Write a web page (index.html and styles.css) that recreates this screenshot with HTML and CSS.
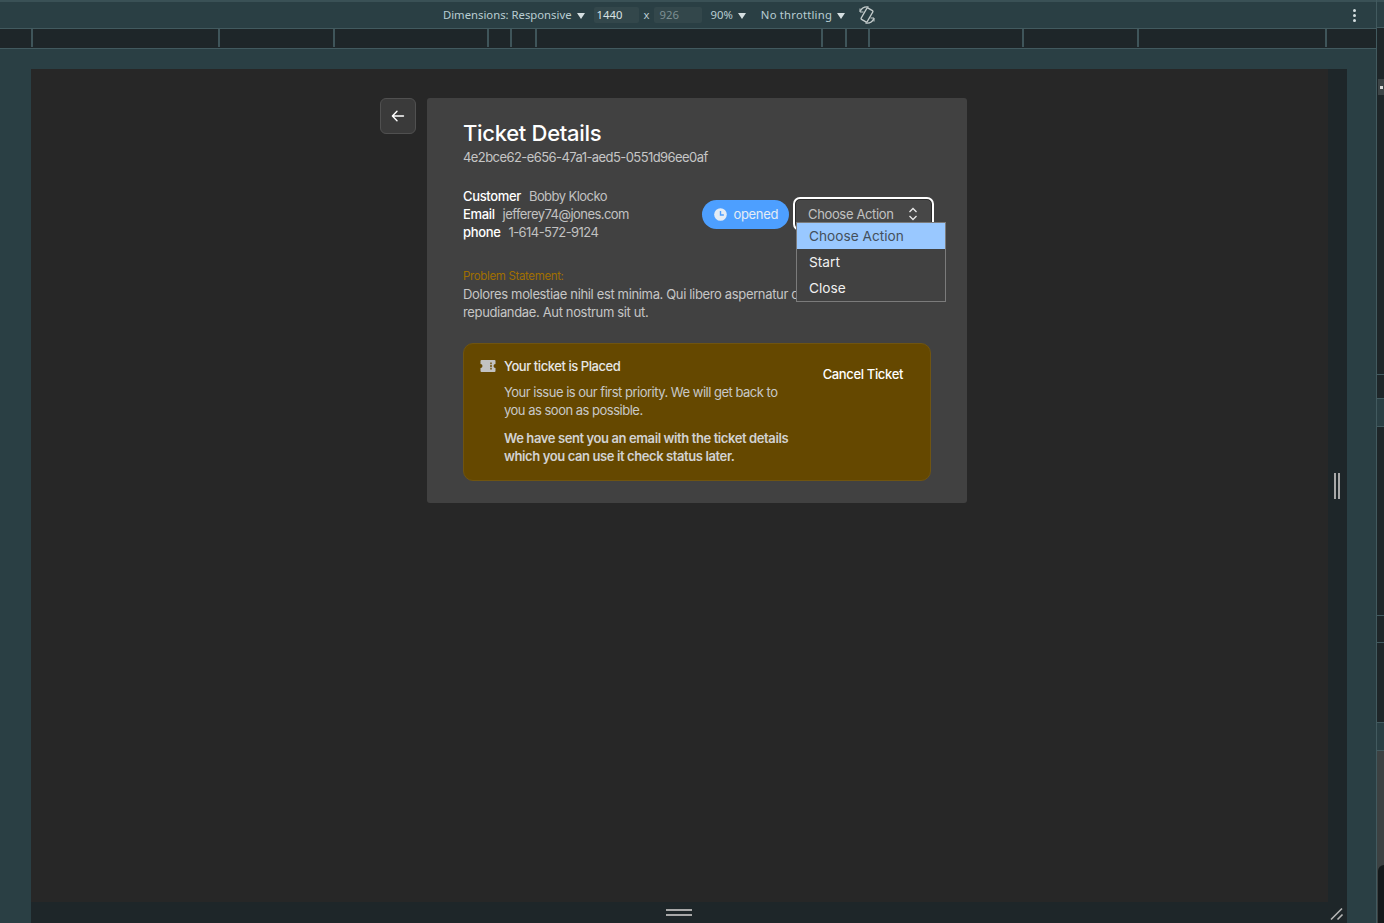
FILE: index.html
```html
<!DOCTYPE html>
<html lang="en">
<head>
    <meta charset="UTF-8">
    <title>Ticket Details</title>
    <link rel="stylesheet" href="styles.css">
</head>
<body>
    <div class="devtools">
        <div class="toolbar">
            <div class="toolbar-items">
                <span class="tool-label">Dimensions: Responsive</span>
                <span class="caret"></span>
                <span class="size-box">1440</span>
                <span class="tool-x">x</span>
                <span class="size-box size-muted">926</span>
                <span class="tool-label tool-zoom">90%</span>
                <span class="caret"></span>
                <span class="tool-label tool-throttle">No throttling</span>
                <span class="caret"></span>
                <svg class="rotate-icon" width="20" height="20" viewBox="0 0 20 20" fill="none" stroke="#c4cccc" stroke-width="1.4">
                    <rect x="6.5" y="3.5" width="7" height="13" rx="1" transform="rotate(30 10 10)"/>
                    <path d="M3 6.5A8 8 0 0 1 11.5 2M17 13.5A8 8 0 0 1 8.5 18"/>
                    <path d="M3 3.5V7H6.5M17 16.5V13H13.5" stroke-width="1"/>
                </svg>
            </div>
            <div class="dots"><i></i><i></i><i></i></div>
        </div>
        <div class="ruler">
            <i style="left:31px"></i><i style="left:218px"></i><i style="left:333px"></i>
            <i style="left:487px"></i><i style="left:510px"></i><i style="left:535px"></i>
            <i style="left:821px"></i><i style="left:845px"></i><i style="left:868px"></i>
            <i style="left:1022px"></i><i style="left:1137px"></i><i style="left:1325px"></i>
        </div>

        <div class="stage">
            <div class="viewport">
                <div class="page">
                    <button class="back-btn" type="button">
                        <svg width="16" height="16" viewBox="0 0 16 16" fill="none" stroke="#fff" stroke-width="1.4" stroke-linecap="round" stroke-linejoin="round">
                            <path d="M13.5 8h-11M7 3.2 2.4 8 7 12.8"/>
                        </svg>
                    </button>
                    <main class="card">
                        <h1 class="title">Ticket Details</h1>
                        <div class="ticket-id">4e2bce62-e656-47a1-aed5-0551d96ee0af</div>

                        <div class="meta-row">
                            <div class="customer">
                                <div><b>Customer</b>Bobby Klocko</div>
                                <div><b>Email</b>jefferey74@jones.com</div>
                                <div><b>phone</b>1-614-572-9124</div>
                            </div>
                            <div class="actions">
                                <span class="status">
                                    <svg width="13" height="13" viewBox="0 0 14 14">
                                        <circle cx="7" cy="7" r="6.8" fill="#e4ecf5"/>
                                        <path d="M7 3.2V7.6H10.6" fill="none" stroke="#4d9fff" stroke-width="1.5"/>
                                    </svg>
                                    opened
                                </span>
                                <div class="select-wrap">
                                    <div class="select">
                                        Choose Action
                                        <svg width="10" height="14" viewBox="0 0 10 14" fill="none" stroke="#e8e8e8" stroke-width="1.3">
                                            <path d="M1.5 5 5 1.5 8.5 5M1.5 9 5 12.5 8.5 9"/>
                                        </svg>
                                    </div>
                                    <ul class="menu">
                                        <li class="selected">Choose Action</li>
                                        <li>Start</li>
                                        <li>Close</li>
                                    </ul>
                                </div>
                            </div>
                        </div>

                        <div class="problem-label">Problem Statement:</div>
                        <p class="problem">Dolores molestiae nihil est minima. Qui libero aspernatur omnis repudiandae. Aut nostrum sit ut.</p>

                        <section class="notice">
                            <div class="notice-body">
                                <h2 class="notice-title">
                                    <svg width="16" height="14" viewBox="0 0 16 14">
                                        <path fill="#c2c2c2" fill-rule="evenodd" d="M1.5 1h13a1 1 0 0 1 1 1v3a2 2 0 0 0 0 4v3a1 1 0 0 1-1 1h-13a1 1 0 0 1-1-1V9a2 2 0 0 0 0-4V2a1 1 0 0 1 1-1ZM10.3 3.4v1.8h1.4V3.4ZM10.3 6.1v1.8h1.4V6.1ZM10.3 8.8v1.8h1.4V8.8Z"/>
                                    </svg>
                                    Your ticket is Placed
                                </h2>
                                <p class="notice-text">Your issue is our first priority. We will get back to you as soon as possible.</p>
                                <p class="notice-strong">We have sent you an email with the ticket details which you can use it check status later.</p>
                            </div>
                            <a class="cancel" href="#">Cancel Ticket</a>
                        </section>
                    </main>
                </div>
            </div>
            <div class="handle-right"><i></i><i></i></div>
            <div class="handle-bottom"><i></i><i></i></div>
            <div class="handle-corner">
                <svg width="14" height="14" viewBox="0 0 14 14" stroke="#b5b5b5" stroke-width="1.6">
                    <path d="M1 12.5 12 1.5M7.5 12.5 12.5 7.5"/>
                </svg>
            </div>
        </div>
    </div>
    <div class="side-strip">
        <span class="strip-head"></span>
        <span class="strip-pill"></span>
        <span class="strip-tab strip-tab-1"></span>
        <span class="strip-line strip-line-1"></span>
        <span class="strip-line strip-line-2"></span>
        <span class="strip-line strip-line-3"></span>
        <span class="strip-tab strip-tab-2"></span>
        <span class="strip-bottom"></span>
        <span class="strip-blob"></span>
    </div>
</body>
</html>
```

FILE: styles.css
```css
* {
    box-sizing: border-box;
}

html, body {
    height: 100%;
}

body {
    margin: 0;
    display: flex;
    overflow: hidden;
    background-color: #2a3f44;
    font-family: Inter, "Liberation Sans", sans-serif;
    color: #fff;
}

.devtools {
    flex: 1;
    display: flex;
    flex-direction: column;
    min-width: 0;
}

/* top bar */
.toolbar {
    height: 29px;
    display: flex;
    align-items: center;
    justify-content: center;
    position: relative;
    padding-bottom: 1px;
    border-top: 2px solid #3a5156;
    border-bottom: 1px solid #425a5f;
    font-family: "Noto Sans", sans-serif;
    font-size: 11.3px;
    color: #b9cdd2;
}

.toolbar-items {
    display: flex;
    align-items: center;
    margin-right: 56px;
}

.caret {
    width: 0;
    height: 0;
    margin: 2px 0 0 5px;
    border-left: 4px solid transparent;
    border-right: 4px solid transparent;
    border-top: 6px solid #d5dfe1;
}

.size-box {
    width: 45px;
    height: 16px;
    margin-left: 9px;
    padding-left: 3px;
    line-height: 16px;
    background-color: #33474b;
    border-radius: 2px;
    color: #d8e2e4;
}

.size-muted {
    width: 48px;
    margin-left: 4px;
    padding-left: 6px;
    color: #7d8f93;
}

.tool-x {
    margin-left: 5px;
}

.tool-zoom {
    margin-left: 9px;
}

.tool-throttle {
    margin-left: 15px;
    letter-spacing: 0.2px;
}

.rotate-icon {
    margin-left: 12px;
}

.dots {
    position: absolute;
    right: 20px;
    top: 7px;
    display: flex;
    flex-direction: column;
    gap: 2px;
}

.dots i {
    width: 3px;
    height: 3px;
    border-radius: 50%;
    background-color: #d5dfe1;
}

.ruler {
    height: 20px;
    position: relative;
    background-color: #1e2629;
    border-bottom: 1px solid #425a5f;
}

.ruler i {
    position: absolute;
    top: 0;
    bottom: 1px;
    width: 2px;
    background-color: #3f555a;
}

/* device frame */
.stage {
    flex: 1;
    display: grid;
    grid-template-columns: 1297px 19px;
    grid-template-rows: 833px 21px;
    padding: 20px 0 0 31px;
    min-height: 0;
}

.viewport {
    background-color: #272727;
    overflow: hidden;
}

.handle-right {
    background-color: #1e2629;
    display: flex;
    justify-content: center;
    align-items: center;
    gap: 2px;
    padding-right: 1px;
}

.handle-right i {
    width: 2px;
    height: 26px;
    background-color: #a8a8a8;
}

.handle-bottom {
    background-color: #1e2629;
    display: flex;
    flex-direction: column;
    align-items: center;
    justify-content: center;
    gap: 3px;
    padding-right: 2px;
}

.handle-bottom i {
    width: 26px;
    height: 2px;
    background-color: #a8a8a8;
}

.handle-corner {
    background-color: #1e2629;
    padding: 3px 0 0 2px;
}

/* page */
.page {
    display: flex;
    align-items: flex-start;
    gap: 11px;
    padding: 29px 0 0 349px;
}

.back-btn {
    width: 36px;
    height: 36px;
    display: flex;
    align-items: center;
    justify-content: center;
    padding: 0;
    background-color: #3a3a3a;
    border: 1px solid #505050;
    border-radius: 6px;
}

.card {
    width: 540px;
    height: 405px;
    padding: 21px 36px 0;
    background-color: #414141;
    border-radius: 3px;
    letter-spacing: -0.35px;
}

.title {
    margin: 0;
    font-size: 22px;
    line-height: 28px;
    font-weight: 500;
    letter-spacing: -0.3px;
}

.ticket-id {
    margin-top: 1px;
    font-size: 13px;
    line-height: 18px;
    letter-spacing: -0.57px;
    color: #c6c6c6;
}

.meta-row {
    display: flex;
    justify-content: space-between;
    align-items: center;
    margin-top: 21px;
    height: 54px;
}

.customer {
    font-size: 13px;
    line-height: 18px;
    letter-spacing: -0.55px;
    color: #c2c2c2;
}

.customer b {
    margin-right: 8px;
    font-weight: 500;
    letter-spacing: -0.35px;
    color: #fff;
}

.actions {
    display: flex;
    align-items: center;
    gap: 6px;
    margin-right: -1px;
}

.status {
    display: flex;
    align-items: center;
    gap: 7px;
    height: 29px;
    padding: 0 11px 0 12px;
    background-color: #4d9fff;
    border-radius: 15px;
    font-size: 13px;
    color: #e4ecf5;
}

.select-wrap {
    position: relative;
}

.select {
    display: flex;
    align-items: center;
    justify-content: space-between;
    width: 137px;
    height: 30px;
    padding: 0 13px 0 12px;
    background-color: #474747;
    border: 1px solid #2b2b2b;
    outline: 2px solid #fff;
    border-radius: 5px;
    font-size: 13px;
    color: #c2c2c2;
}

.menu {
    position: absolute;
    top: 23px;
    left: 1px;
    width: 150px;
    height: 80px;
    margin: 0;
    padding: 0;
    list-style: none;
    background-color: #414141;
    border: 1px solid #7b7b7b;
    font-size: 13.7px;
    letter-spacing: 0;
    color: #f0f0f0;
}

.menu li {
    height: 26px;
    padding-left: 12px;
    line-height: 26px;
}

.menu .selected {
    background-color: #99c8ff;
    color: #44505c;
}

.problem-label {
    margin-top: 28px;
    font-size: 11.5px;
    line-height: 14px;
    color: #a06f00;
}

.problem {
    margin: 2px 0 0;
    width: 396px;
    font-size: 13px;
    line-height: 18px;
    color: #c6c6c6;
}

.notice {
    display: flex;
    justify-content: space-between;
    width: 468px;
    height: 138px;
    margin-top: 22px;
    padding: 13px 27px 0 16px;
    background-color: #654800;
    border: 1px solid #6f5410;
    border-radius: 10px;
}

.notice-body {
    width: 310px;
    font-size: 13px;
    line-height: 18px;
    color: #c8c8c8;
}

.notice-title {
    display: flex;
    align-items: center;
    gap: 8px;
    margin: 0 0 8px;
    font-size: 13px;
    line-height: 18px;
    font-weight: 500;
    letter-spacing: -0.45px;
    color: #e6e6e6;
}

.notice-text {
    margin: 0 0 10px 24px;
    letter-spacing: -0.5px;
}

.notice-strong {
    margin: 0 0 0 24px;
    font-weight: 600;
    letter-spacing: -0.4px;
    color: #d2d2d2;
}

.cancel {
    margin-top: 8px;
    font-size: 13px;
    line-height: 18px;
    font-weight: 500;
    color: #fff;
    text-decoration: none;
}

/* right strip, a sliver of the devtools panel */
.side-strip {
    width: 8px;
    position: relative;
    background-color: #1e2629;
    border-left: 1px solid #425a5f;
}

.strip-head {
    position: absolute;
    top: 0;
    left: 0;
    width: 7px;
    height: 28px;
    background-color: #2a3f44;
    border-top: 2px solid #3a5156;
    border-bottom: 1px solid #425a5f;
}

.strip-pill {
    position: absolute;
    top: 79px;
    left: 1px;
    width: 6px;
    height: 16px;
    background-color: #3c4446;
}

.strip-pill::after {
    content: "";
    position: absolute;
    top: 7px;
    left: 2px;
    width: 3px;
    height: 3px;
    background-color: #d8d8d8;
}

.strip-tab {
    position: absolute;
    left: 0;
    width: 7px;
    background-color: #2a3f44;
    border-top: 1px solid #425a5f;
    border-bottom: 1px solid #425a5f;
}

.strip-tab-1 {
    top: 398px;
    height: 29px;
}

.strip-tab-2 {
    top: 722px;
    height: 29px;
}

.strip-line {
    position: absolute;
    left: 0;
    width: 7px;
    height: 1px;
    background-color: #425a5f;
}

.strip-line-1 {
    top: 374px;
}

.strip-line-2 {
    top: 615px;
}

.strip-line-3 {
    top: 642px;
}

.strip-bottom {
    position: absolute;
    top: 751px;
    bottom: 0;
    left: 0;
    width: 7px;
    background-color: #3c4142;
}

.strip-blob {
    position: absolute;
    bottom: 0;
    right: 0;
    width: 6px;
    height: 58px;
    background-color: #14191b;
    border-top-left-radius: 6px;
}
```
